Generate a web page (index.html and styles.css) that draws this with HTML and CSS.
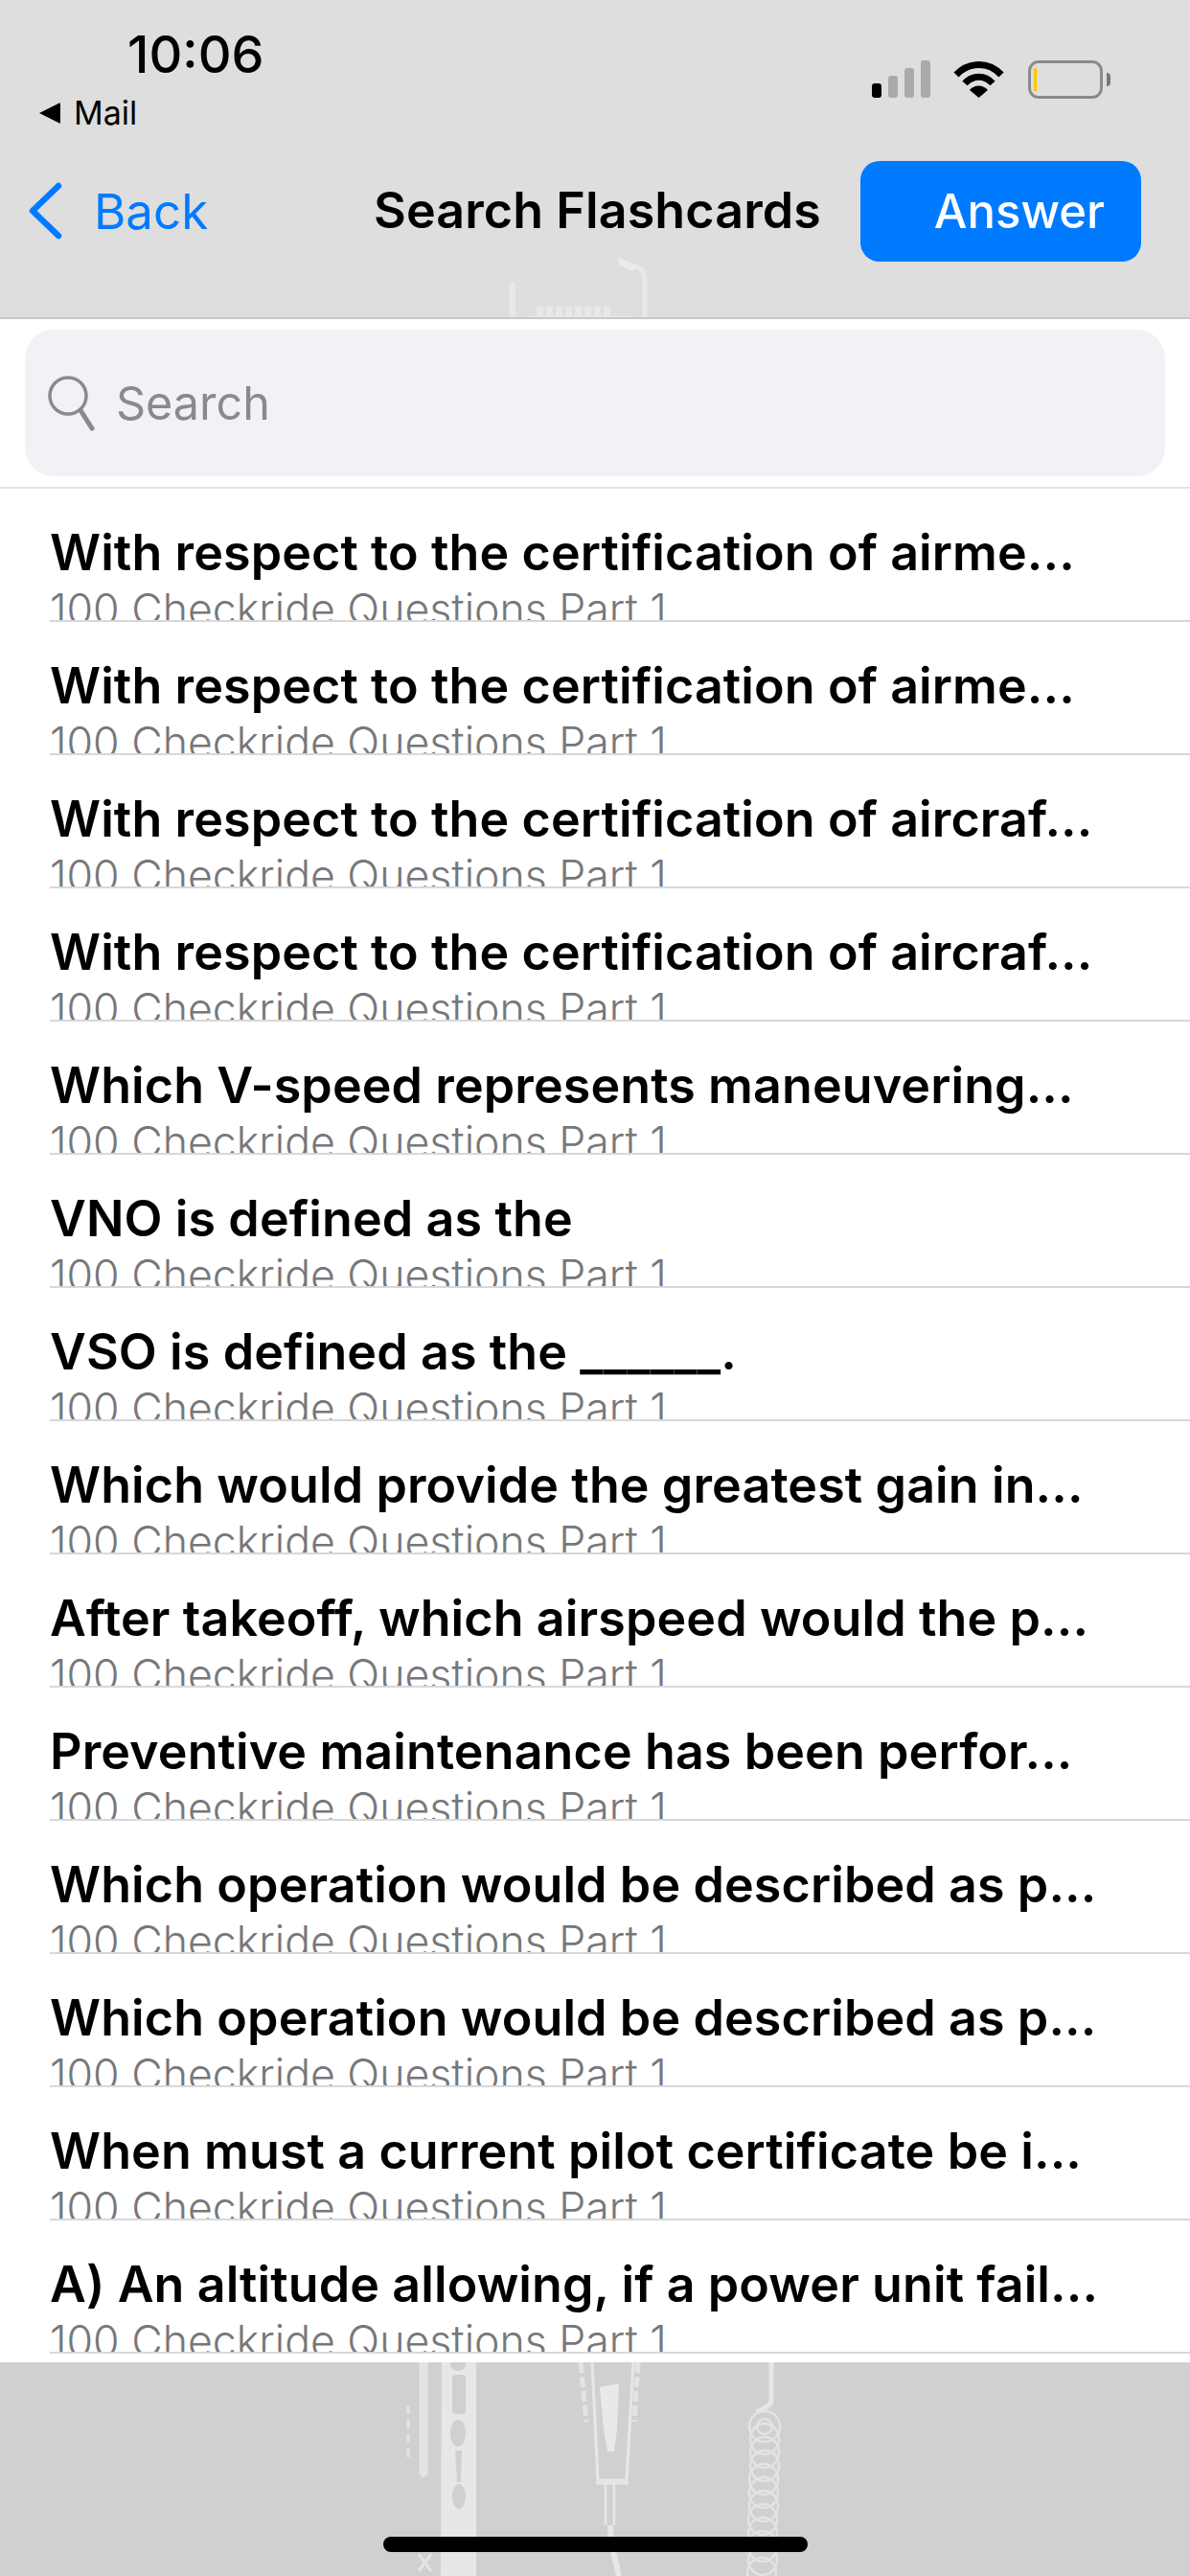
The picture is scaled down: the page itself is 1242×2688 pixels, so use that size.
FILE: index.html
```html
<!DOCTYPE html>
<html>
<head>
  <meta charset="UTF-8">
  <title>Search Flashcards</title>
  <link rel="stylesheet" href="styles.css">
</head>
<body>
  <header class="top">
    <svg class="art art-top" width="200" height="68" viewBox="0 0 200 68">
      <path d="M35 30V68" fill="none" stroke="#e8e8e8" stroke-width="6"/>
      <path d="M50 66H160" fill="none" stroke="#e8e8e8" stroke-width="2"/>
      <path d="M60 60H140" fill="none" stroke="#e8e8e8" stroke-width="11" stroke-dasharray="7 3"/>
      <path d="M146 7L168 15C172 18 173 22 173 28V68" fill="none" stroke="#e8e8e8" stroke-width="5"/>
      <path d="M146 4L166 13L160 18L146 11Z" fill="#ececec"/>
    </svg>
    <div class="status">
      <div class="status-left">
        <div class="time">10:06</div>
        <div class="mail">
          <svg width="22" height="24" viewBox="0 0 22 24"><path d="M0 12L21 1.5Q22 1 22 2.5V21.500Q22 23 21 22.500Z" fill="#000"/></svg>
          <span>Mail</span>
        </div>
      </div>
      <div class="status-right">
        <svg width="61" height="39" viewBox="0 0 61 39">
          <rect x="0" y="24" width="10" height="15" rx="3" fill="#000"/>
          <rect x="17" y="16" width="10" height="23" rx="3" fill="#aaa"/>
          <rect x="34" y="8" width="10" height="31" rx="3" fill="#aaa"/>
          <rect x="51" y="0" width="10" height="39" rx="3" fill="#aaa"/>
        </svg>
        <svg class="wifi" width="53" height="39" viewBox="0 0 53 39">
          <path d="M3 15C16 1 37 1 50 15" fill="none" stroke="#000" stroke-width="7"/>
          <path d="M12 24C20 15 33 15 41 24" fill="none" stroke="#000" stroke-width="7"/>
          <path d="M17 31C22 25 31 25 36 31L26.500 39Z" fill="#000"/>
        </svg>
        <div class="battery"><i class="level"></i></div>
        <i class="battery-tip"></i>
      </div>
    </div>
    <nav class="navbar">
      <a class="back">
        <svg width="36" height="60" viewBox="0 0 36 60"><path d="M31 4L4 30L31 56" fill="none" stroke="#007aff" stroke-width="6.5" stroke-linecap="round" stroke-linejoin="round"/></svg>
        <span>Back</span>
      </a>
      <h1>Search Flashcards</h1>
      <button class="answer">Answer</button>
    </nav>
  </header>

  <div class="search-wrap">
    <div class="search">
      <svg width="49" height="58" viewBox="0 0 49 58"><circle cx="21" cy="21" r="19" fill="none" stroke="#8a8a8e" stroke-width="3.5"/><path d="M34 36L46 55" stroke="#8a8a8e" stroke-width="5" stroke-linecap="round"/></svg>
      <span>Search</span>
    </div>
  </div>

  <ul class="list">
    <li><div class="cell"><b>With respect to the certification of airme...</b><small>100 Checkride Questions Part 1</small></div></li>
    <li><div class="cell"><b>With respect to the certification of airme...</b><small>100 Checkride Questions Part 1</small></div></li>
    <li><div class="cell"><b>With respect to the certification of aircraf...</b><small>100 Checkride Questions Part 1</small></div></li>
    <li><div class="cell"><b>With respect to the certification of aircraf...</b><small>100 Checkride Questions Part 1</small></div></li>
    <li><div class="cell"><b>Which V-speed represents maneuvering...</b><small>100 Checkride Questions Part 1</small></div></li>
    <li><div class="cell"><b>VNO is defined as the</b><small>100 Checkride Questions Part 1</small></div></li>
    <li><div class="cell"><b>VSO is defined as the ______.</b><small>100 Checkride Questions Part 1</small></div></li>
    <li><div class="cell"><b>Which would provide the greatest gain in...</b><small>100 Checkride Questions Part 1</small></div></li>
    <li><div class="cell"><b>After takeoff, which airspeed would the p...</b><small>100 Checkride Questions Part 1</small></div></li>
    <li><div class="cell"><b>Preventive maintenance has been perfor...</b><small>100 Checkride Questions Part 1</small></div></li>
    <li><div class="cell"><b>Which operation would be described as p...</b><small>100 Checkride Questions Part 1</small></div></li>
    <li><div class="cell"><b>Which operation would be described as p...</b><small>100 Checkride Questions Part 1</small></div></li>
    <li><div class="cell"><b>When must a current pilot certificate be i...</b><small>100 Checkride Questions Part 1</small></div></li>
    <li><div class="cell"><b>A) An altitude allowing, if a power unit fail...</b><small>100 Checkride Questions Part 1</small></div></li>
  </ul>

  <footer class="bottom">
    <svg class="art art-bottom" width="440" height="223" viewBox="0 0 440 223">
      <!-- left strip -->
      <path d="M42 0V115" stroke="#e4e4e4" stroke-width="9" fill="none" stroke-linecap="round"/>
      <path d="M26 45V100" stroke="#e4e4e4" stroke-width="3" stroke-dasharray="9 6" fill="none"/>
      <path d="M37 200L50 218M50 200L37 218" stroke="#e4e4e4" stroke-width="3" fill="none"/>
      <!-- ladder -->
      <path d="M61 0H97V223H60Z" fill="#e7e7e7"/>
      <ellipse cx="78" cy="2" rx="8" ry="7" fill="#d0d0d0"/>
      <rect x="72" y="13" width="14" height="41" rx="3" fill="#d0d0d0"/>
      <ellipse cx="78" cy="74" rx="8" ry="14" fill="#d0d0d0"/>
      <path d="M75 92H82L81 125H77Z" fill="#d0d0d0"/>
      <ellipse cx="79" cy="140" rx="7" ry="13" fill="#d0d0d0"/>
      <!-- funnel -->
      <path d="M206 0L212 62M266 0L262 62" fill="none" stroke="#e4e4e4" stroke-width="5" stroke-dasharray="11 4"/>
      <path d="M218 0L224 123H254L261 0" fill="none" stroke="#e7e7e7" stroke-width="3"/>
      <path d="M222 0H257L247 24H229Z" fill="none"/>
      <path d="M226 26L246 22L244 70L241 93H234L230 70Z" fill="#e9e9e9"/>
      <path d="M222 126H256" fill="none" stroke="#e7e7e7" stroke-width="3"/>
      <path d="M232 124V170M241 124V170" fill="none" stroke="#e7e7e7" stroke-width="2.500"/>
      <path d="M237 170C237 190 242 205 246 223" fill="none" stroke="#e7e7e7" stroke-width="6"/>
      <!-- coil -->
      <path d="M405 0V40C405 46 395 48 390 52" fill="none" stroke="#e7e7e7" stroke-width="5"/>
      <g fill="none" stroke="#e3e3e3" stroke-width="2.500">
        <circle cx="398" cy="67" r="16"/>
        <circle cx="398" cy="67" r="8"/>
        <ellipse cx="398" cy="80" rx="15" ry="16"/>
        <ellipse cx="398" cy="94" rx="15" ry="16"/>
        <ellipse cx="398" cy="108" rx="15" ry="16"/>
        <ellipse cx="397" cy="122" rx="15" ry="16"/>
        <ellipse cx="397" cy="136" rx="15" ry="16"/>
        <ellipse cx="397" cy="150" rx="15" ry="16"/>
        <ellipse cx="396" cy="164" rx="15" ry="16"/>
        <ellipse cx="396" cy="178" rx="15" ry="16"/>
        <ellipse cx="396" cy="192" rx="15" ry="16"/>
        <ellipse cx="396" cy="206" rx="15" ry="16"/>
        <ellipse cx="395" cy="220" rx="15" ry="16"/>
      </g>
    </svg>
    <div class="home-bar"></div>
  </footer>
</body>
</html>
```
FILE: styles.css
```css
* { box-sizing: border-box; }
html, body { margin: 0; padding: 0; }
body { width: 1242px; height: 2688px; overflow: hidden; background: #fff; font-family: Inter, "Liberation Sans", sans-serif; color: #000; }

.top { position: relative; height: 333px; background: #dedede; border-bottom: 2px solid #c8c8c8; overflow: hidden; }
.art { position: absolute; }
.art-top { left: 500px; top: 265px; }

.status { position: relative; display: flex; justify-content: space-between; height: 140px; padding: 30px 83px 0 41px; }
.time { margin-left: 92px; font-size: 54px; line-height: 54px; font-weight: 500; }
.mail { display: flex; align-items: center; gap: 14px; margin-top: 15px; font-size: 34px; line-height: 38px; }
.status-right { display: flex; align-items: flex-start; padding-top: 33px; }
.wifi { margin-left: 24px; }
.battery { width: 78px; height: 40px; margin-left: 25px; padding: 5px 3px; border: 3px solid #8a8a8a; border-radius: 11px; }
.level { display: block; width: 3px; height: 24px; background: #ffc400; }
.battery-tip { width: 4px; height: 14px; margin: 13px 0 0 4px; background: #777; border-radius: 0 7px 7px 0; }

.navbar { position: relative; display: flex; align-items: center; height: 108px; margin-top: 26px; padding: 0 51px 0 30px; }
.back { display: flex; align-items: center; gap: 32px; width: 360px; color: #007aff; font-size: 51px; }
.navbar h1 { margin: 0; font-size: 52px; line-height: 60px; font-weight: 600; letter-spacing: 0.1px; white-space: nowrap; }
.answer { width: 293px; height: 105px; margin-left: auto; padding: 0 38px 0 0; border: none; border-radius: 20px; background: #007aff; color: #fff; font-family: inherit; font-size: 49px; font-weight: 500; text-align: right; }

.search-wrap { height: 177px; padding: 11px 26px 0; border-bottom: 2px solid #e4e4e4; }
.search { display: flex; align-items: center; gap: 22px; height: 153px; padding-left: 24px; background: #f1f1f6; border-radius: 30px; color: #8a8a8e; font-size: 48.5px; }

.list { margin: 0; padding: 0; list-style: none; }
.list li { height: 139px; padding-left: 52px; }
.cell { display: flex; flex-direction: column; height: 139px; overflow: hidden; border-bottom: 2px solid #d8d8d8; }
.cell b { display: block; flex: none; margin-top: 37px; font-size: 52px; line-height: 60px; font-weight: 600; letter-spacing: 0.1px; white-space: nowrap; }
.cell small { display: block; flex: none; margin-top: 4px; font-size: 44.6px; line-height: 50px; font-weight: 300; color: #77777b; white-space: nowrap; }

.bottom { position: relative; height: 223px; margin-top: 9px; background: #d0d0d0; overflow: hidden; }
.art-bottom { left: 400px; top: 0; }
.home-bar { position: absolute; left: 400px; top: 182px; width: 443px; height: 16px; border-radius: 8px; background: #000; }
```
